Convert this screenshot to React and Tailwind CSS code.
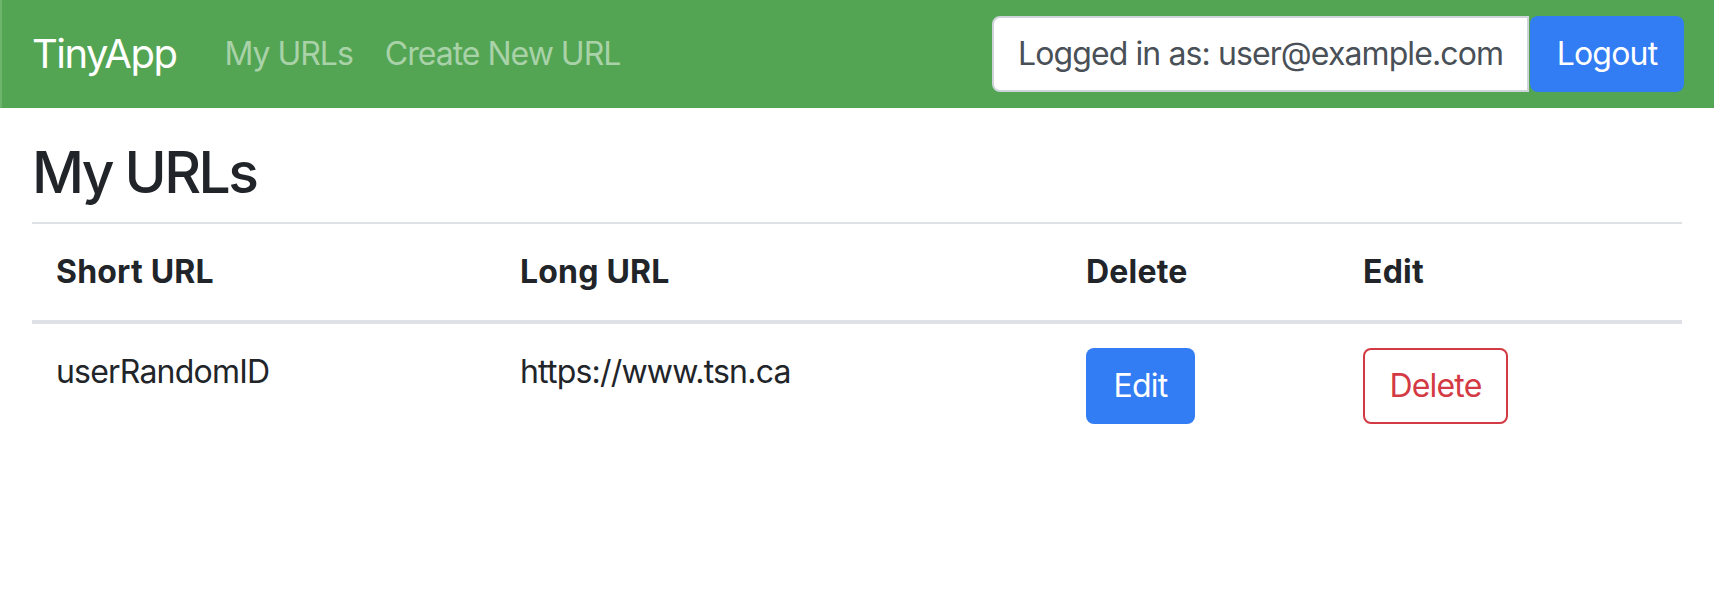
import React from 'react';

const urls = [{ id: 'userRandomID', longURL: 'https://www.tsn.ca' }];

export default function App() {
  return (
    <div className="min-h-[612px] bg-white text-[#212529] font-['Inter','Liberation_Sans',sans-serif]">
      <nav className="flex h-[108px] items-center justify-between border-l-2 border-[#6db56d] bg-[#53a553] pl-[30px] pr-[30px]">
        <div className="flex items-center">
          <a className="mr-8 text-[40px] leading-[60px] text-white tracking-[-1.5px]">TinyApp</a>
          <a className="px-4 text-[32px] leading-[48px] text-[#a9d2a9] tracking-[-1px]">My URLs</a>
          <a className="px-4 text-[32px] leading-[48px] text-[#a9d2a9] tracking-[-1px]">Create New URL</a>
        </div>
        <form className="flex items-center">
          <div className="flex h-[76px] w-[537px] items-center whitespace-nowrap rounded-l-lg border-2 border-[#ced4da] bg-white px-6 text-[32px] text-[#495057] tracking-[-0.9px]">
            Logged in as: user@example.com
          </div>
          <button className="ml-[1px] h-[76px] w-[154px] rounded-lg bg-[#327cf4] text-[32px] text-white tracking-[-0.8px]">
            Logout
          </button>
        </form>
      </nav>

      <main className="px-8">
        <h1 className="mt-[29px] mb-[13px] text-[57px] font-medium leading-[72px] tracking-[-2.6px]">My URLs</h1>
        <table className="w-full border-collapse text-[32px] leading-[48px] tracking-[-0.8px]">
          <thead>
            <tr className="border-t-2 border-b-4 border-[#dee2e6] text-left">
              <th className="w-[464px] p-6 font-bold tracking-[0.2px]">Short URL</th>
              <th className="w-[566px] p-6 font-bold tracking-[0.2px]">Long URL</th>
              <th className="w-[277px] p-6 font-bold tracking-[0.2px]">Delete</th>
              <th className="p-6 font-bold tracking-[0.2px]">Edit</th>
            </tr>
          </thead>
          <tbody>
            {urls.map((u) => (
              <tr key={u.id} className="align-top">
                <td className="p-6">{u.id}</td>
                <td className="p-6">{u.longURL}</td>
                <td className="p-6">
                  <button className="h-[76px] w-[109px] rounded-lg bg-[#327cf4] text-white">Edit</button>
                </td>
                <td className="p-6">
                  <button className="h-[76px] w-[145px] rounded-lg border-2 border-[#d33a43] text-[#d33a43]">Delete</button>
                </td>
              </tr>
            ))}
          </tbody>
        </table>
      </main>
    </div>
  );
}
